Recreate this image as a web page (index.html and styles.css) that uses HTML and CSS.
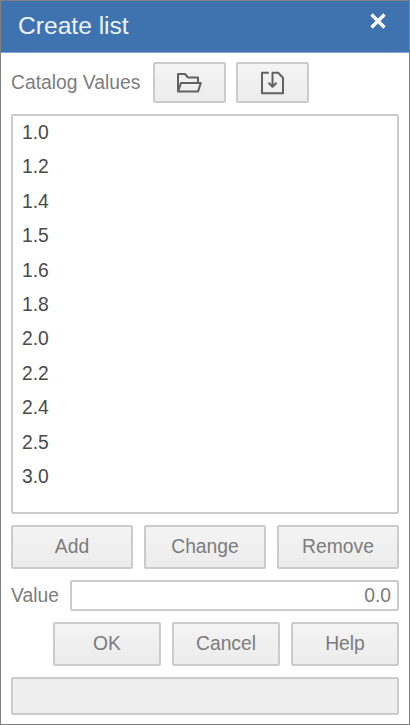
FILE: index.html
```html
<!DOCTYPE html>
<html lang="en">
<head>
<meta charset="utf-8">
<title>Create list</title>
<link rel="stylesheet" href="styles.css">
</head>
<body>
<main class="dialog">
  <header class="titlebar">
    <h1 class="title">Create list</h1>
    <svg class="close" viewBox="0 0 18 18"><path d="M2.5 2.5L15.5 15.5M15.5 2.5L2.5 15.5"/></svg>
  </header>
  <div class="content">
    <div class="catalog">
      <span class="label catalog-label">Catalog Values</span>
      <button class="button icon-button" aria-label="Open">
        <svg class="icon" viewBox="0 0 28 26"><path d="M2 21.6V4H9L12 7.5H22V12.5M2 21.6L5 12.9H24.8L22 21.6Z"/></svg>
      </button>
      <button class="button icon-button" aria-label="Save">
        <svg class="icon" viewBox="0 0 28 26"><path d="M9.8 2.8H3V23.2H24V7.8L19.2 2.8H13.5V16.5M9.5 12.8L13.5 16.8L17.5 12.8"/></svg>
      </button>
    </div>
    <ul class="list">
      <li>1.0</li><li>1.2</li><li>1.4</li><li>1.5</li><li>1.6</li><li>1.8</li><li>2.0</li><li>2.2</li><li>2.4</li><li>2.5</li><li>3.0</li>
    </ul>
    <div class="actions">
      <button class="button">Add</button>
      <button class="button">Change</button>
      <button class="button">Remove</button>
    </div>
    <div class="value-row">
      <span class="label value-label">Value</span>
      <div class="field">0.0</div>
    </div>
    <div class="actions confirm">
      <button class="button">OK</button>
      <button class="button">Cancel</button>
      <button class="button">Help</button>
    </div>
    <div class="status"></div>
  </div>
</main>
</body>
</html>
```
FILE: styles.css
```css
* { box-sizing: border-box; }
body {
  margin: 0;
  font: 19.3px/24px "Liberation Sans", Arial, sans-serif;
  color: #7c7c7c;
}
.dialog {
  width: 410px;
  height: 725px;
  border: 1px solid #808080;
  background: #fff;
  overflow: hidden;
}
.titlebar {
  display: flex;
  justify-content: space-between;
  height: 52px;
  padding: 0 22px 0 17px;
  background: #3f73b0;
  border-bottom: 1px solid #7fa3d2;
}
.title {
  margin: 10px 0 0;
  font-size: 24.6px;
  line-height: 30px;
  font-weight: 400;
  color: #edf3fa;
}
.close {
  width: 18px;
  height: 18px;
  margin-top: 11px;
  fill: none;
  stroke: #fff;
  stroke-width: 3.2;
}
.content {
  display: flex;
  flex-direction: column;
  gap: 11px;
  padding: 9px 10px 0;
}
.catalog { display: flex; height: 41px; align-items: center; }
.catalog-label { width: 142px; white-space: nowrap; }
.button {
  display: flex;
  align-items: center;
  justify-content: center;
  margin: 0;
  padding: 0;
  border: 2px solid #cbcbcb;
  border-radius: 2px;
  background: linear-gradient(#f4f4f4, #ececec);
  font: inherit;
  color: inherit;
}
.icon-button { width: 73px; height: 41px; }
.icon-button + .icon-button { margin-left: 10px; }
.icon {
  width: 28px;
  height: 26px;
  fill: none;
  stroke: #626262;
  stroke-width: 2;
  stroke-linejoin: round;
}
.list {
  height: 400px;
  margin: 0;
  padding: 0 0 0 9px;
  border: 2px solid #cbcbcb;
  border-radius: 2px;
  list-style: none;
  line-height: 34.4px;
  color: #4a4a4a;
}
.actions { display: flex; gap: 11px; height: 44px; }
.actions .button { flex: 1; }
.value-row { display: flex; align-items: center; height: 31px; }
.value-label { width: 59px; }
.field {
  flex: 1;
  height: 31px;
  padding-right: 6px;
  border: 2px solid #cbcbcb;
  border-radius: 2px;
  line-height: 27px;
  text-align: right;
}
.confirm { padding-left: 42px; }
.status {
  height: 38px;
  border: 2px solid #cbcbcb;
  border-radius: 2px;
  background: #eee;
}
```
